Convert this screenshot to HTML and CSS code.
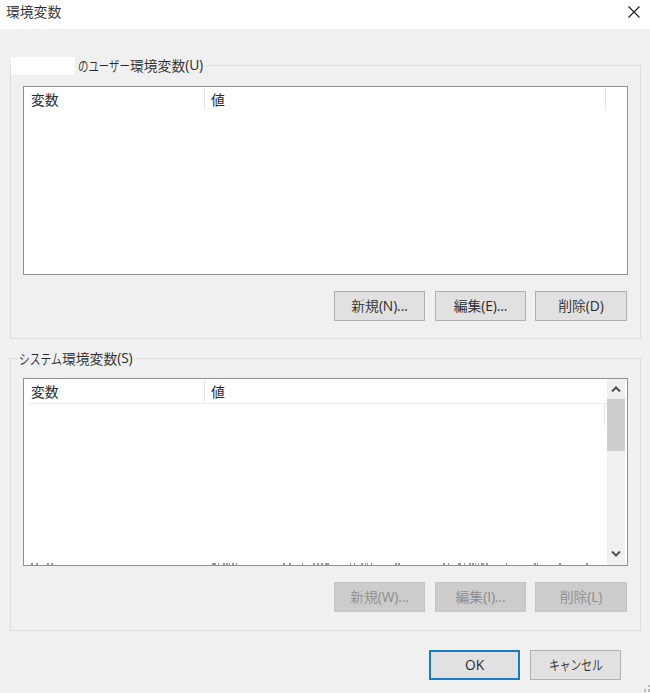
FILE: index.html
```html
<!DOCTYPE html>
<html lang="ja">
<head>
<meta charset="utf-8">
<title>環境変数</title>
<link rel="stylesheet" href="styles.css">
</head>
<body>
<div class="dialog">
  <header class="titlebar">
    <h1>環境変数</h1>
    <svg class="close" width="12" height="12" viewBox="0 0 12 12"><path d="M.5.5l11 11M11.5.5l-11 11"/></svg>
  </header>
  <section class="group user">
    <h2 class="caption"><span class="username"></span><span class="kana kana-user">のユーザー</span>環境変数<span class="key">(U)</span></h2>
    <div class="list">
      <div class="columns"><span class="col name">変数</span><span class="col value">値</span></div>
    </div>
    <div class="buttons">
      <button>新規<span class="key">(N)...</span></button>
      <button>編集<span class="key">(E)...</span></button>
      <button>削除<span class="key">(D)</span></button>
    </div>
  </section>
  <section class="group system">
    <h2 class="caption"><span class="kana kana-system">システム</span>環境変数<span class="key">(S)</span></h2>
    <div class="list scrolling">
      <div class="pane">
        <div class="columns"><span class="col name">変数</span><span class="col value">値</span></div>
        <div class="rows"><i class="tail"></i></div>
        <svg class="cut-row" width="580" height="3" viewBox="24 562 580 3"><path d="M31 564h2M36 564h2M47 564h2M51 564h2M212 564h4M218 564h1M223 564h2M226 564h2M229 564h1M232 564h2M236 564h1M283 564h2M289 564h2M302 564h1M313 564h2M317 564h2M321 564h2M325 564h4M350 564h1M354 564h1M361 564h2M365 564h1M367 564h1M371 564h1M395 564h2M398 564h2M443 564h2M448 564h1M458 564h3M464 564h1M469 564h2M472 564h2M475 564h1M478 564h1M481 564h3M486 564h2M506 564h1M534 564h2M537 564h1M559 564h2M586 564h2"/></svg>
      </div>
      <div class="scrollbar">
        <svg width="10" height="7" viewBox="0 0 10 7"><path d="M1 5.5l4-4 4 4"/></svg>
        <span class="thumb"></span>
        <svg width="10" height="7" viewBox="0 0 10 7"><path d="M1 1.5l4 4 4-4"/></svg>
      </div>
    </div>
    <div class="buttons">
      <button disabled>新規<span class="key">(W)...</span></button>
      <button disabled>編集<span class="key">(I)...</span></button>
      <button disabled>削除<span class="key">(L)</span></button>
    </div>
  </section>
  <footer class="buttons actions">
    <button class="default"><span class="key">OK</span></button>
    <button><span class="kana kana-cancel">キャンセル</span></button>
  </footer>
  <svg class="grip" width="6" height="8" viewBox="0 0 6 8"><path d="M4 0h2v2H4zM0 4h2v3H0zM4 4h2v3H4z"/></svg>
</div>
</body>
</html>
```
FILE: styles.css
```css
* { box-sizing: border-box; }
body { margin: 0; }
.dialog {
  position: relative;
  width: 650px;
  height: 693px;
  overflow: hidden;
  background: #f0f0f0;
  color: #2a2a2a;
  font: 13.8px/20px "Noto Sans CJK JP", sans-serif;
}
h1, h2 { margin: 0; font-size: inherit; font-weight: 350; }
.titlebar {
  display: flex;
  justify-content: space-between;
  height: 29px;
  padding: 1px 10px 0 6px;
  background: #fff;
}
.close { margin-top: 5px; fill: none; stroke: #222; stroke-width: 1.2; }
.group {
  width: 631px;
  height: 274px;
  margin-left: 10px;
  padding: 0 13px 0 12px;
  border: 1px solid #dcdcdc;
}
.user { margin-top: 36px; }
.system { margin-top: 19px; height: 273px; }
.caption {
  display: flex;
  width: max-content;
  height: 20px;
  margin-top: -10px;
  background: #f0f0f0;
  line-height: 18px;
  white-space: nowrap;
}
.user .caption { margin-left: -12px; padding-right: 3px; }
.system .caption { margin-left: -5px; padding: 0 3px 0 1px; }
.username { width: 64px; height: 18px; margin: 1px 3px 0 0; background: #fff; }
.key { font-family: "Open Sans", sans-serif; font-size: 13.8px; font-weight: 400; letter-spacing: -.1px; }
.kana { display: inline-block; white-space: nowrap; transform-origin: left center; }
.kana-user { width: 52px; transform: scaleX(.755); }
.kana-system { width: 43px; transform: scaleX(.78); }
.kana-cancel { width: 54px; transform: scaleX(.78); }
.list {
  width: 605px;
  height: 189px;
  margin-top: 10px;
  border: 1px solid #8e9096;
  background: #fff;
}
.columns { display: flex; width: 582px; height: 25px; padding-top: 1px; }
.col { height: 22px; padding: 1px 0 0 7px; border-right: 1px solid #e3e3e3; }
.name { width: 181px; }
.value { flex: 1; padding-left: 6px; }
.scrolling { display: flex; height: 188px; margin-top: 9px; }
.pane { width: 583px; height: 186px; display: flex; flex-direction: column; }
.pane .columns { height: 24px; }
.pane .col { height: 23px; }
.pane .value { border-right: 0; }
.rows { flex: 1; margin-left: 5px; border-top: 1px solid #ececec; }
.tail { display: block; width: 1px; height: 21px; margin-left: 575px; background: #e5e5e5; }
.cut-row { stroke: #777; stroke-width: 1.6; display: block; }
.scrollbar {
  display: flex;
  flex-direction: column;
  align-items: center;
  width: 18px;
  height: 186px;
  padding: 7px 0 8px;
  background: #f0f0f0;
}
.scrollbar svg { fill: none; stroke: #505050; stroke-width: 2; }
.thumb { width: 18px; height: 52px; margin: 6px 0 auto; background: #cdcdcd; }
.buttons { display: flex; gap: 9px; justify-content: flex-end; margin-top: 16px; }
button {
  width: 91px;
  height: 30px;
  padding: 0 0 2px;
  border: 1px solid #b0b0b0;
  background: #e1e1e1;
  color: inherit;
  font: inherit;
  font-weight: 350;
  white-space: nowrap;
}
.group button:first-child { margin-right: 1px; }
.group button:last-child { width: 92px; }
button:disabled { border-color: #c3c3c3; background: #ccc; color: #8d8d8d; }
.actions { gap: 10px; margin: 19px 29px 0 0; }
.default { border: 2px solid #1879c9; padding: 0 0 2px; }
.grip { position: absolute; right: 0; bottom: 0; fill: #b9b9b9; }
```
